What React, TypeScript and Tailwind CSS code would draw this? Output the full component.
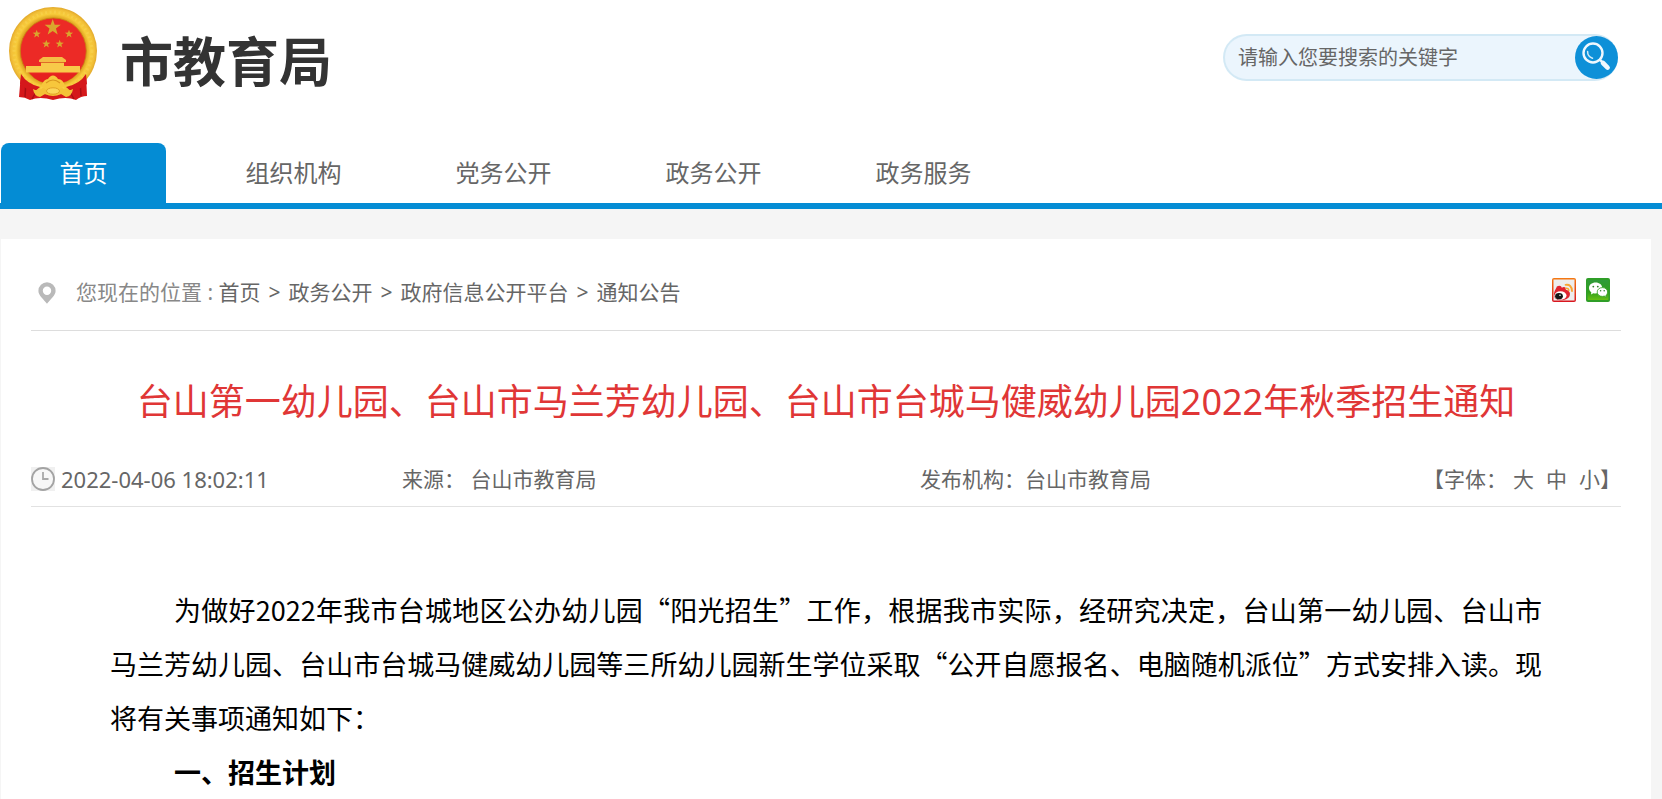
import { useState, type FormEvent } from "react";

const NAV_ITEMS = ["首页", "组织机构", "党务公开", "政务公开", "政务服务"];

const CRUMBS = ["首页", "政务公开", "政府信息公开平台", "通知公告"];

const FONT_SIZES = [
  { label: "大", className: "text-[30px]" },
  { label: "中", className: "text-[27px]" },
  { label: "小", className: "text-[24px]" },
];

function starPoints(cx: number, cy: number, r: number): string {
  return Array.from({ length: 10 }, (_, i) => {
    const radius = i % 2 ? r * 0.4 : r;
    const angle = (Math.PI / 5) * i - Math.PI / 2;
    return `${(cx + radius * Math.cos(angle)).toFixed(2)},${(cy + radius * Math.sin(angle)).toFixed(2)}`;
  }).join(" ");
}

function Emblem() {
  return (
    <svg width="90" height="96" viewBox="8 6 90 96" className="shrink-0" aria-hidden="true">
      <defs>
        <radialGradient id="ring" gradientUnits="userSpaceOnUse" cx="53" cy="51" r="44">
          <stop offset="0.74" stopColor="#d99a1c" />
          <stop offset="0.84" stopColor="#f7cb3a" />
          <stop offset="0.94" stopColor="#f3c138" />
          <stop offset="1" stopColor="#e2a92c" />
        </radialGradient>
      </defs>
      <path d="M21 74 L19 97 Q25 97 30 100 Q40 96 53 100 Q66 96 76 100 Q81 96 87 96 L86 74 Z" fill="#d5181b" />
      <path d="M26 80 L25 97 M80 80 L81 96 M36 92 L32 99 M70 92 L74 99" stroke="#a90f14" strokeWidth="1.5" />
      <circle cx="53" cy="51" r="44" fill="url(#ring)" />
      <circle cx="53" cy="51" r="39" fill="none" stroke="#fbdc62" strokeWidth="3" strokeDasharray="2 2.5" opacity="0.35" />
      <circle cx="53.3" cy="51" r="33" fill="#ec2a26" stroke="#c98412" strokeWidth="0.8" />
      <g fill="#d9a62d">
        <polygon points={starPoints(52.7, 27.5, 8.5)} />
        <polygon points={starPoints(36.7, 34, 4.3)} />
        <polygon points={starPoints(69, 34, 4.3)} />
        <polygon points={starPoints(46.3, 44, 4.3)} />
        <polygon points={starPoints(59.7, 44, 4.3)} />
      </g>
      <path d="M43 57 H62 L66 60 V62 H39 V60 Z" fill="#f5bd45" />
      <path d="M41 62 H64 V66 H80 V72.5 H26 V66 H41 Z" fill="#f8ca49" />
      <path d="M40 62.5 H65" stroke="#d8541f" strokeWidth="0.8" />
      <path d="M30 73.5 H77 Q68 84 53 84 Q38 84 30 73.5 Z" fill="#e6211f" />
      <path d="M41 86 Q44 79 48 79 Q50 75.5 53 75.5 Q56 75.5 58 79 Q63 79 65 86 L60 89 H46 Z" fill="#f7c73c" />
      <path d="M46 83 Q53 77 60 83" fill="none" stroke="#d9961f" strokeWidth="1.2" />
      <path d="M21 74 Q27 84 40 87 L34 92 Q24 88 20 84 Z M86 74 Q80 84 66 87 L72 92 Q82 88 87 84 Z" fill="#d5181b" />
      <path d="M33 89 Q38 92 43 88 Q53 94 62 88 Q68 92 73 89 Q72 96 66 97 L61 94 Q53 98 45 94 L40 97 Q34 96 33 89 Z" fill="#f4c237" />
      <ellipse cx="53" cy="91" rx="6.5" ry="3.2" fill="#fbd75a" stroke="#d9961f" strokeWidth="0.8" />
    </svg>
  );
}

function SearchIcon() {
  return (
    <svg width="43" height="43" viewBox="0 0 43 43" aria-hidden="true">
      <circle cx="21.5" cy="21.5" r="21.5" fill="#0e90d8" />
      <circle cx="18" cy="17" r="9.5" fill="none" stroke="#f0f8fe" strokeWidth="2.4" />
      <path d="M12.6 15.5 Q12.5 20.5 17.5 22.3" fill="none" stroke="#cfe9f8" strokeWidth="1.5" strokeLinecap="round" />
      <path d="M24.6 23.6 L27.4 26.2" stroke="#f0f8fe" strokeWidth="2.4" />
      <path d="M28 27 L32.6 31.6" stroke="#f0f8fe" strokeWidth="4.6" strokeLinecap="round" />
    </svg>
  );
}

function PinIcon() {
  return (
    <svg width="18" height="22" viewBox="0 0 18 22" className="shrink-0" aria-hidden="true">
      <path
        d="M9 0.3 A8.6 8.6 0 0 1 17.6 8.9 C17.6 13.5 12 17.5 9 21.7 C6 17.5 0.4 13.5 0.4 8.9 A8.6 8.6 0 0 1 9 0.3 Z M9 4.6 A4.2 4.2 0 1 0 9 13 A4.2 4.2 0 1 0 9 4.6 Z"
        fill="#b9b9b9"
        fillRule="evenodd"
      />
    </svg>
  );
}

function ClockIcon() {
  return (
    <svg width="24" height="24" viewBox="0 0 24 24" className="shrink-0" aria-hidden="true">
      <rect width="24" height="24" fill="#f0f0f0" />
      <circle cx="12" cy="12" r="11" fill="#f7f7f7" stroke="#a3a3a3" strokeWidth="1.8" />
      <path d="M12 5 V12 H17.5" fill="none" stroke="#a8a8a8" strokeWidth="1.8" />
    </svg>
  );
}

function WeiboIcon() {
  return (
    <svg width="24" height="24" viewBox="0 0 24 24" aria-hidden="true">
      <defs>
        <linearGradient id="weibo" x1="0" y1="0" x2="0" y2="1">
          <stop offset="0" stopColor="#f57a12" />
          <stop offset="1" stopColor="#d8141f" />
        </linearGradient>
      </defs>
      <rect width="24" height="24" rx="2" fill="url(#weibo)" />
      <rect x="1.5" y="1.5" width="21" height="21" fill="#ededed" />
      <path d="M2 17 C1.8 13 4.5 10.5 4.8 8.5 C7 7.2 9.5 7.5 9.8 9.8 C12 8.5 14.2 9 13.8 11.8 C17 12.4 18.5 14.5 17.8 17.2 C17 20.6 12.5 22.4 8 22.2 C4.5 22 2.2 20.2 2 17 Z" fill="#e02330" />
      <ellipse cx="8.5" cy="17.5" rx="6" ry="4.3" fill="#fff" />
      <ellipse cx="7" cy="18.2" rx="3.9" ry="3.1" fill="#151515" />
      <circle cx="8" cy="17.2" r="0.8" fill="#fff" />
      <path d="M13.6 6.9 Q19.6 6 20 13" fill="none" stroke="#f8a532" strokeWidth="1.9" strokeLinecap="round" />
      <path d="M13.8 10.2 Q16.6 9.8 16.8 12.6" fill="none" stroke="#f8a532" strokeWidth="1.5" strokeLinecap="round" />
    </svg>
  );
}

function WechatIcon() {
  return (
    <svg width="24" height="24" viewBox="0 0 24 24" aria-hidden="true">
      <defs>
        <linearGradient id="wechat" x1="0" y1="0" x2="0" y2="1">
          <stop offset="0" stopColor="#2f9a3a" />
          <stop offset="0.6" stopColor="#2f9f1c" />
          <stop offset="1" stopColor="#66bf14" />
        </linearGradient>
      </defs>
      <rect width="24" height="24" rx="2" fill="#2f9e28" />
      <rect x="1.5" y="2" width="21" height="20" rx="1" fill="url(#wechat)" />
      <path d="M9.6 4.6 C5.8 4.6 3 7 3 10 C3 11.8 4 13.3 5.3 14.2 L5 16.4 L7.4 15.2 C9 15.7 10.6 15.6 12 15.1 C14.6 14.2 16.2 12.2 16.2 10 C16.2 7 13.4 4.6 9.6 4.6 Z" fill="#fff" />
      <path d="M16.4 9.6 C13.4 9.6 11.2 11.5 11.2 14 C11.2 16.5 13.4 18.4 16.4 18.4 C17.1 18.4 17.8 18.3 18.4 18.1 L20.4 19.4 L20 17.3 C21 16.5 21.6 15.3 21.6 14 C21.6 11.5 19.4 9.6 16.4 9.6 Z" fill="#fff" stroke="#2f9f1c" strokeWidth="0.8" />
      <circle cx="7.3" cy="8.6" r="0.9" fill="#2f7f2a" />
      <circle cx="11.8" cy="8.6" r="0.9" fill="#2f7f2a" />
      <circle cx="14.6" cy="12.7" r="0.8" fill="#2f7f2a" />
      <circle cx="18.2" cy="12.7" r="0.8" fill="#2f7f2a" />
    </svg>
  );
}

export default function App() {
  const [active, setActive] = useState("首页");
  const [keyword, setKeyword] = useState("");
  const [bodySize, setBodySize] = useState("text-[27px]");

  function handleSearch(e: FormEvent) {
    e.preventDefault();
    setKeyword(keyword.trim());
  }

  return (
    <div
      lang="zh-CN"
      className="min-h-screen bg-[#f5f5f5] font-['Noto_Sans','Noto_Sans_CJK_SC',sans-serif] text-[#666]"
    >
      <header className="bg-white">
        <div className="flex h-[143px] items-start justify-between pt-1.5 pr-11 pl-2">
          <div className="flex items-start gap-[22px]">
            <Emblem />
            <h1 className="pt-5 text-[53px] leading-[72px] font-bold text-[#333]">市教育局</h1>
          </div>
          <form
            onSubmit={handleSearch}
            className="mt-7 flex h-[47px] w-[395px] items-center rounded-full border-2 border-r-0 border-[#d3e9f5] bg-[#ebf5fd]"
          >
            <input
              type="text"
              aria-label="搜索"
              value={keyword}
              onChange={(e) => setKeyword(e.target.value)}
              placeholder="请输入您要搜索的关键字"
              className="min-w-0 flex-1 bg-transparent pl-[13px] text-[20px] leading-7 outline-none placeholder:text-[#666]"
            />
            <button type="submit" aria-label="搜索" className="shrink-0 rounded-full">
              <SearchIcon />
            </button>
          </form>
        </div>

        <nav className="flex gap-[45px] border-b-6 border-[#048cd4] pl-px">
          {NAV_ITEMS.map((item) => (
            <a
              key={item}
              href="#"
              onClick={() => setActive(item)}
              className={`w-[165px] rounded-t-lg text-center text-[24px] leading-[60px] ${
                active === item ? "bg-[#048cd4] text-white" : "text-[#666]"
              }`}
            >
              {item}
            </a>
          ))}
        </nav>
      </header>

      <main className="mt-[30px] mr-[11px] ml-px bg-white px-[30px] pb-10">
        <div className="flex h-[92px] items-center justify-between border-b border-[#ddd] pt-4 pr-[11px] pl-[7px]">
          <div className="flex items-center gap-5 text-[21px] leading-8">
            <PinIcon />
            <p className="pb-0.5">
              <span className="text-[#888]">您现在的位置 : </span>
              {CRUMBS.map((crumb, i) => (
                <span key={crumb}>
                  {i > 0 && <span className="mx-2">&gt;</span>}
                  <a href="#">{crumb}</a>
                </span>
              ))}
            </p>
          </div>
          <div className="flex gap-2.5 pb-1.5">
            <button aria-label="分享到新浪微博">
              <WeiboIcon />
            </button>
            <button aria-label="分享到微信">
              <WechatIcon />
            </button>
          </div>
        </div>

        <h2 className="pt-11 text-center text-[36px] leading-[54px] text-[#e03636]">
          台山第一幼儿园、台山市马兰芳幼儿园、台山市台城马健威幼儿园2022年秋季招生通知
        </h2>

        <div className="mt-[34px] grid grid-cols-[371fr_518fr_701fr] items-center border-b border-[#e2e2e2] pb-[11px] text-[21px] leading-8">
          <div className="flex items-center gap-1.5">
            <ClockIcon />
            <time className="text-[22px]">2022-04-06 18:02:11</time>
          </div>
          <div>来源： 台山市教育局</div>
          <div className="flex justify-between">
            <span>发布机构：台山市教育局</span>
            <span className="flex">
              【字体：
              <span className="ml-1.5 flex gap-3">
                {FONT_SIZES.map((size) => (
                  <button key={size.label} onClick={() => setBodySize(size.className)}>
                    {size.label}
                  </button>
                ))}
              </span>
              】
            </span>
          </div>
        </div>

        {/* The CJK face leads here so that the curly quotes come out full width. */}
        <article
          className={`px-[79px] pt-[76px] text-justify font-['Noto_Sans_CJK_SC',sans-serif] leading-[54px] text-black ${bodySize}`}
        >
          <p className="indent-16">
            为做好2022年我市台城地区公办幼儿园“阳光招生”工作，根据我市实际，经研究决定，台山第一幼儿园、台山市马兰芳幼儿园、台山市台城马健威幼儿园等三所幼儿园新生学位采取“公开自愿报名、电脑随机派位”方式安排入读。现将有关事项通知如下：
          </p>
          <h3 className="indent-16 font-bold">一、招生计划</h3>
        </article>
      </main>
    </div>
  );
}
